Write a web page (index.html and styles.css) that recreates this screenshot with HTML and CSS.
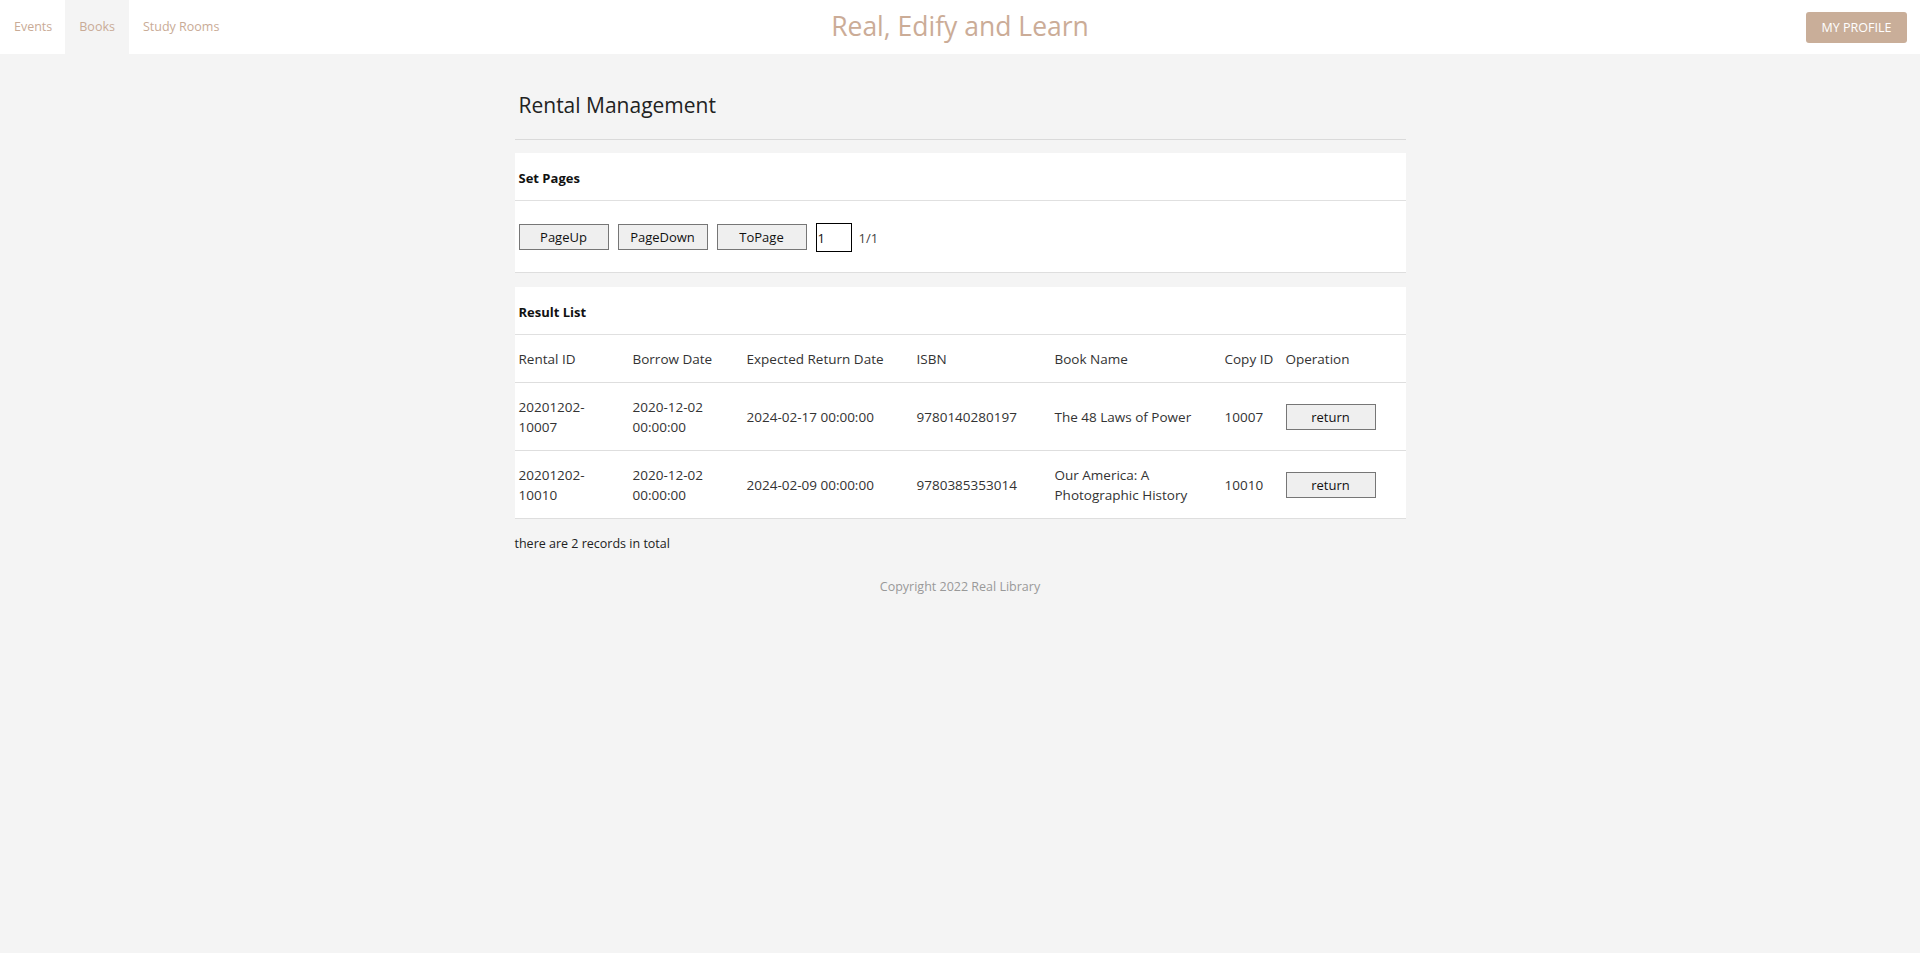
FILE: index.html
```html
<!DOCTYPE html>
<html lang="en">
<head>
<meta charset="utf-8">
<title>Rental Management</title>
<link rel="stylesheet" href="styles.css">
</head>
<body>
<header class="topbar">
  <nav class="nav">
    <a class="nav-item" href="#">Events</a>
    <a class="nav-item active" href="#">Books</a>
    <a class="nav-item" href="#">Study Rooms</a>
  </nav>
  <div class="brand">Real, Edify and Learn</div>
  <div class="actions"><button class="profile-btn">MY PROFILE</button></div>
</header>

<main class="container">
  <h1 class="page-title">Rental Management</h1>

  <section class="panel panel-bordered">
    <div class="panel-head">Set Pages</div>
    <div class="pager">
      <button class="btn">PageUp</button>
      <button class="btn">PageDown</button>
      <button class="btn">ToPage</button>
      <input class="page-input" type="text" value="1">
      <span class="page-count">1/1</span>
    </div>
  </section>

  <section class="panel">
    <div class="panel-head">Result List</div>
    <table class="results">
      <thead>
        <tr>
          <th class="c-id">Rental ID</th>
          <th class="c-borrow">Borrow Date</th>
          <th class="c-expected">Expected Return Date</th>
          <th class="c-isbn">ISBN</th>
          <th class="c-name">Book Name</th>
          <th class="c-copy">Copy ID</th>
          <th class="c-op">Operation</th>
        </tr>
      </thead>
      <tbody>
        <tr>
          <td>20201202-<br>10007</td>
          <td>2020-12-02<br>00:00:00</td>
          <td>2024-02-17 00:00:00</td>
          <td>9780140280197</td>
          <td>The 48 Laws of Power</td>
          <td>10007</td>
          <td><button class="btn">return</button></td>
        </tr>
        <tr>
          <td>20201202-<br>10010</td>
          <td>2020-12-02<br>00:00:00</td>
          <td>2024-02-09 00:00:00</td>
          <td>9780385353014</td>
          <td>Our America: A<br>Photographic History</td>
          <td>10010</td>
          <td><button class="btn">return</button></td>
        </tr>
      </tbody>
    </table>
  </section>

  <p class="total">there are 2 records in total</p>
  <footer class="copyright">Copyright 2022 Real Library</footer>
</main>
</body>
</html>
```

FILE: styles.css
```css
* { box-sizing: border-box; }

body {
  margin: 0;
  background: #f4f4f4;
  font-family: "Open Sans", "Noto Sans", sans-serif;
  color: #333;
}

.topbar {
  height: 54px;
  background: #fff;
  display: grid;
  grid-template-columns: 1fr auto 1fr;
  align-items: center;
}

.nav {
  display: flex;
  height: 100%;
}

.nav-item {
  display: flex;
  align-items: center;
  padding: 0 13px 2px 14px;
  font-size: 12.5px;
  color: #c9ab96;
  text-decoration: none;
}

.nav-item.active { background: #f4f4f4; padding: 0 14px 2px; }

.brand {
  font-size: 26.5px;
  color: #cbac97;
  padding-bottom: 3px;
}

.actions {
  display: flex;
  justify-content: flex-end;
  padding-right: 13px;
}

.profile-btn {
  width: 101px;
  height: 31px;
  margin-top: 1px;
  border: none;
  border-radius: 3px;
  background: #c9ae99;
  color: #fff;
  font-family: inherit;
  font-size: 12.5px;
  padding: 0;
}

.container {
  width: 891px;
  margin: 0 auto;
}

.page-title {
  margin: 37px 0 0;
  padding: 0 0 20px 4px;
  font-size: 21px;
  line-height: 28px;
  font-weight: 400;
  color: #222;
  border-bottom: 1px solid #dadada;
}

.panel {
  background: #fff;
  margin-top: 13px;
}

.panel + .panel { margin-top: 14px; }

.panel-bordered { border-bottom: 1px solid #dedede; }

.panel-head {
  height: 48px;
  display: flex;
  align-items: center;
  padding: 2px 0 0 4px;
  font-size: 13px;
  font-weight: 700;
  color: #111;
  border-bottom: 1px solid #e0e0e0;
}

.pager {
  height: 71px;
  display: flex;
  align-items: center;
  gap: 9px;
  padding-left: 4px;
}

.btn {
  width: 90px;
  height: 26px;
  padding: 0;
  background: #efefef;
  border: 1px solid #767676;
  border-radius: 0;
  font-family: inherit;
  font-size: 13px;
  color: #111;
}

.page-input {
  width: 36px;
  height: 29px;
  margin-top: 2px;
  border: 1px solid #000;
  padding: 0 1px;
  font-family: inherit;
  font-size: 13px;
  color: #111;
}

.page-count {
  margin-left: -2px;
  margin-top: 2px;
  font-size: 13px;
  color: #444;
}

.results {
  width: 100%;
  border-collapse: collapse;
  font-size: 13.5px;
  color: #333;
}

.results th,
.results td {
  text-align: left;
  font-weight: 400;
  padding: 14px 4px 13px;
  line-height: 20px;
  vertical-align: middle;
}

.results tr { border-bottom: 1px solid #dedede; }

.c-id { width: 114px; }
.c-borrow { width: 114px; }
.c-expected { width: 170px; }
.c-isbn { width: 138px; }
.c-name { width: 170px; }
.c-copy { width: 61px; }
.c-op { width: 124px; }

.total {
  margin: 15px 0 0;
  font-size: 12.5px;
  line-height: 20px;
  color: #222;
}

.copyright {
  margin-top: 23px;
  text-align: center;
  font-size: 12.5px;
  line-height: 20px;
  color: #999;
}
```
